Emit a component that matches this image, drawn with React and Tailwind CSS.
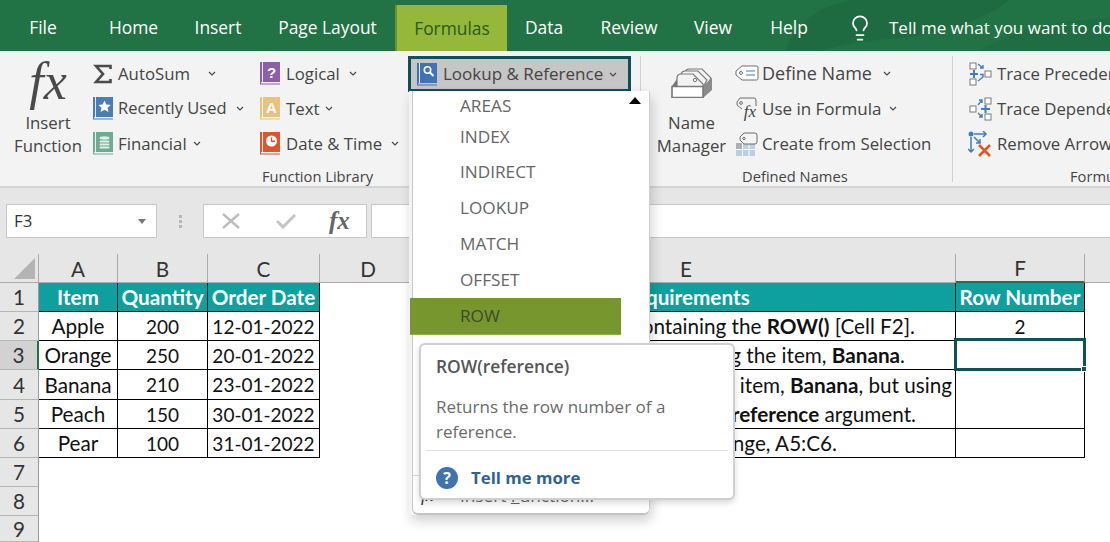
import React from 'react';
import { Lightbulb } from 'lucide-react';

const tabs = [
    { label: 'File', w: 'w-[86px]' },
    { label: 'Home', w: 'w-[95px]' },
    { label: 'Insert', w: 'w-[74px]' },
    { label: 'Page Layout', w: 'w-[140px] pl-[5px]' },
];
const tabsAfter = [
    { label: 'Data', w: 'w-[74px]' },
    { label: 'Review', w: 'w-[96px]' },
    { label: 'View', w: 'w-[72px]' },
    { label: 'Help', w: 'w-[80px]' },
];

const Chevron = ({ className = '' }) => (
    <svg width="8" height="5" viewBox="0 0 8 5" className={className}>
        <path d="M1 1l3 3 3-3" fill="none" stroke="#444" strokeWidth="1.1" />
    </svg>
);

// little coloured function book used all over the ribbon
const Book = ({ color, line, children }) => (
    <svg width="20" height="23" viewBox="0 0 20 23" className="shrink-0">
        <rect x="0" y="0" width="20" height="20" fill={color} />
        <rect x="2" y="0" width="1" height="20" fill="#fff" opacity="0.85" />
        <path d="M0.5 0v22H20" fill="none" stroke={line || color} strokeWidth="1.2" />
        {children}
    </svg>
);

const SigmaIcon = () => (
    <svg width="19" height="20" viewBox="0 0 19 20" className="shrink-0">
        <path d="M17.5 5V2H3l7 8-7 8h14.5v-3" fill="none" stroke="#4a4a4a" strokeWidth="2.6" />
    </svg>
);

const StarBook = () => (
    <Book color="#4a7db5">
        <path d="M11.5 3.5l1.9 4 4.3.4-3.2 2.9 1 4.3-4-2.3-4 2.3 1-4.3-3.2-2.9 4.3-.4z" fill="#fff" />
    </Book>
);
const StackBook = () => (
    <Book color="#6dab93">
        <ellipse cx="11.5" cy="6" rx="5" ry="1.7" fill="#dfeee8" />
        <rect x="6.5" y="8.4" width="10" height="2.2" rx="1" fill="#dfeee8" />
        <rect x="6.5" y="11.4" width="10" height="2.2" rx="1" fill="#dfeee8" />
        <rect x="6.5" y="14.4" width="10" height="2.2" rx="1" fill="#dfeee8" />
    </Book>
);
const LetterBook = ({ color, letter }) => (
    <Book color={color}>
        <text x="11.5" y="15.5" textAnchor="middle" fontSize="15" fontWeight="700" fill="#fff" fontFamily="'Liberation Sans', sans-serif">{letter}</text>
    </Book>
);
const ClockBook = () => (
    <Book color="#d9572f">
        <circle cx="11.5" cy="9" r="5.5" fill="#fff" />
        <path d="M11.5 5.5V9.3H15" fill="none" stroke="#d9572f" strokeWidth="1.4" />
    </Book>
);
const LookupBook = () => (
    <Book color="#3f73b5">
        <circle cx="10.5" cy="7" r="3.2" fill="none" stroke="#fff" strokeWidth="1.6" />
        <path d="M13 9.5l3.5 3.5" stroke="#fff" strokeWidth="2" />
    </Book>
);

const TagIcon = () => (
    <svg width="24" height="17" viewBox="0 0 24 17" className="shrink-0">
        <path d="M7 1h14.5a1.5 1.5 0 011.5 1.5v11a1.5 1.5 0 01-1.5 1.5H7l-6-5V6z" fill="#fff" stroke="#6d6d6d" />
        <circle cx="6" cy="8" r="1.5" fill="none" stroke="#6d6d6d" />
        <path d="M11 6h9M11 10h9" stroke="#3f7fc0" strokeWidth="1.2" />
    </svg>
);
const FormulaTagIcon = () => (
    <svg width="22" height="24" viewBox="0 0 22 24" className="shrink-0">
        <path d="M4 1h14a2 2 0 012 2v6M1 5l3-4M1 5v3l5 4" fill="none" stroke="#6d6d6d" />
        <circle cx="5" cy="6" r="1.4" fill="none" stroke="#6d6d6d" />
        <text x="14" y="20" textAnchor="middle" fontSize="17" fontStyle="italic" fill="#444" fontFamily="'Liberation Serif', serif">fx</text>
    </svg>
);
const SelectionIcon = () => (
    <svg width="22" height="24" viewBox="0 0 22 24" className="shrink-0">
        <rect x="0" y="11" width="19" height="13" fill="#b9cfe4" />
        <rect x="0" y="11" width="6.5" height="6.5" fill="#8f8f8f" opacity="0.45" />
        <path d="M0 17.5h19M6.5 11v13M13 11v13" stroke="#fff" strokeWidth="1" />
        <path d="M8 1h11a2 2 0 012 2v7a2 2 0 01-2 2H8l-4-4V5z" fill="#f3f3f3" stroke="#6d6d6d" />
        <circle cx="8" cy="6.5" r="1.2" fill="none" stroke="#6d6d6d" />
    </svg>
);
const NameManagerIcon = () => (
    <svg width="42" height="31" viewBox="0 0 42 31" className="shrink-0">
        <path d="M14 5q1-3 4-3h13l9 9-5 9H12z" fill="#f3f3f3" stroke="#7a7a7a" strokeWidth="1.2" />
        <path d="M10 7q1-3 4-3h13l9 9-5 9H8z" fill="#f3f3f3" stroke="#7a7a7a" strokeWidth="1.2" />
        <path d="M6 11q0-4 4-4h12l10 10v4H6z" fill="#f3f3f3" stroke="#7a7a7a" strokeWidth="1.2" />
        <circle cx="24" cy="13" r="1.7" fill="none" stroke="#7a7a7a" />
        <path d="M32 19l9-8v12l-9 8z" fill="#8a8a8a" />
        <path d="M1 19.5h31v11H1z" fill="#fff" stroke="#7a7a7a" strokeWidth="1.6" />
        <path d="M1 19l5-7v7z" fill="#777" />
    </svg>
);

const Box = ({ x, y }) => <rect x={x} y={y} width="6" height="6" fill="#fff" stroke="#7a7a7a" />;
const TracePrecedentsIcon = () => (
    <svg width="23" height="24" viewBox="0 0 23 24" className="shrink-0">
        <Box x={1} y={1} /><Box x={1} y={17} /><Box x={16} y={9} />
        <path d="M1 12h8M5 8v8" stroke="#3f7fc0" strokeWidth="2" />
        <path d="M9 2l5 4M14 3v3h-3M9 19l5-4M11 12.5h3v3" fill="none" stroke="#3f7fc0" strokeWidth="1.4" />
    </svg>
);
const TraceDependentsIcon = () => (
    <svg width="23" height="24" viewBox="0 0 23 24" className="shrink-0">
        <Box x={1} y={9} /><Box x={16} y={1} /><Box x={16} y={17} />
        <path d="M12 12h9M16.5 8v8" stroke="#3f7fc0" strokeWidth="2" />
        <path d="M9 8l4-5M10 3h3v3M9 16l4 4M13 17v3h-3" fill="none" stroke="#3f7fc0" strokeWidth="1.4" />
    </svg>
);
const RemoveArrowsIcon = () => (
    <svg width="24" height="26" viewBox="0 0 24 26" className="shrink-0">
        <circle cx="3" cy="3" r="2.5" fill="#3f7fc0" />
        <path d="M6 3h12M15 0l3 3-3 3M3 6v15M0 18l3 3 3-3M6 6l6 6M12 8v4H8" fill="none" stroke="#3f7fc0" strokeWidth="1.5" />
        <path d="M11 14l11 11M22 14L11 25" stroke="#e2572b" strokeWidth="2.6" />
    </svg>
);

const RibbonItem = ({ icon, label, chevron, gap = 'ml-[6px]', chevronGap = 'ml-[9px]', iconBox = 'w-[19px]', textSize = '' }) => (
    <div className="flex items-center h-[35px]">
        <div className={`${iconBox} flex items-center justify-center shrink-0`}>{icon}</div>
        <span className={`${gap} ${textSize} whitespace-nowrap`}>{label}</span>
        {chevron && <Chevron className={chevronGap} />}
    </div>
);

const GroupLabel = ({ children, className = '' }) => (
    <div className={`h-[22px] leading-[22px] text-[14.7px] text-[#444] whitespace-nowrap ${className}`}>{children}</div>
);

const Cell = ({ children, className = '' }) => (
    <div className={`flex items-center justify-center pt-[2px] border-r border-b border-black whitespace-nowrap overflow-hidden ${className}`}>{children}</div>
);
const Head = ({ children, className = '' }) => (
    <div className={`flex items-center justify-center pt-[3px] bg-[#e6e6e6] border-r border-[#ababab] text-[#333] ${className}`}>{children}</div>
);
const RowHead = ({ children, active }) => (
    <div className={`flex items-center justify-center pt-[2px] border-b border-[#b5b5b5] text-[#333] ${active ? 'bg-[#d2d2d2] text-[#1f6b43] border-r-2 border-r-[#217346]' : 'bg-[#e6e6e6] border-r border-r-[#9a9a9a]'}`}>{children}</div>
);
const Req = ({ children, pr }) => (
    <div className={`flex items-center justify-end pt-[2px] border-r border-b border-black whitespace-nowrap overflow-hidden ${pr}`}><span>{children}</span></div>
);

const rows = [
    ['Apple', '200', '12-01-2022'],
    ['Orange', '250', '20-01-2022'],
    ['Banana', '210', '23-01-2022'],
    ['Peach', '150', '30-01-2022'],
    ['Pear', '100', '31-01-2022'],
];

const DataCells = ({ row }) => (
    <>
        <Cell>{row[0]}</Cell>
        <Cell className="text-[19px]">{row[1]}</Cell>
        <Cell className="text-[19px]">{row[2]}</Cell>
    </>
);

const Sheet = () => (
    <div className="grid grid-cols-[39px_79px_90px_112px_97px_539px_129px_1fr] grid-rows-[29px_29px_29px_29px_30px_29px_29px_29px_29px_26px] text-[20.7px] font-['Lato','Open_Sans',sans-serif] text-[#111] bg-white">
        {/* column letters */}
        <div className="bg-[#e6e6e6] border-r border-b border-[#ababab] flex items-end justify-end pr-[3px] pb-[3px]">
            <svg width="21" height="21" viewBox="0 0 21 21"><path d="M21 0v21H0z" fill="#b4b4b4" /></svg>
        </div>
        {['A', 'B', 'C', 'D', 'E'].map(c => <Head key={c} className="border-b border-b-[#ababab]">{c}</Head>)}
        <Head className="bg-[#d2d2d2] text-[#1f6b43] border-b-2 border-b-[#217346]">F</Head>
        <div className="bg-[#e6e6e6] border-b border-[#ababab]" />

        {/* row 1 */}
        <RowHead>1</RowHead>
        {['Item', 'Quantity', 'Order Date'].map(t => (
            <Cell key={t} className="bg-[#0da09f] text-white font-bold">{t}</Cell>
        ))}
        <div />
        <Cell className="bg-[#0da09f] text-white font-bold">Requirements</Cell>
        <Cell className="bg-[#0da09f] text-white font-bold">Row Number</Cell>
        <div />

        {/* row 2 */}
        <RowHead>2</RowHead>
        <DataCells row={rows[0]} />
        <div />
        <Req pr="pr-[40px]">Find the row number of the cell containing the <b>ROW()</b> [Cell F2].</Req>
        <Cell className="text-[19px]">2</Cell>
        <div />

        {/* row 3 */}
        <RowHead active>3</RowHead>
        <DataCells row={rows[1]} />
        <div />
        <Req pr="pr-[50px]">Find the row number using the item, <b>Banana</b>.</Req>
        <div className="relative border-r border-b border-black">
            <div className="absolute -left-[2px] -top-[3px] -right-[2px] -bottom-[2px] border-[3px] border-[#0f5257]" />
            <div className="absolute -right-[3px] -bottom-[3px] w-[6px] h-[6px] bg-[#0f5257] border border-white" />
        </div>
        <div />

        {/* row 4 and 5, E and F are merged */}
        <RowHead>4</RowHead>
        <DataCells row={rows[2]} />
        <div />
        <div className="row-span-2 flex flex-col items-end justify-center pt-[2px] border-r border-b border-black whitespace-nowrap leading-[29px]">
            <span className="pr-[3px]">Find the row number of the item, <b>Banana</b>, but using</span>
            <span className="pr-[39px]">the <b>reference</b> argument.</span>
        </div>
        <div className="row-span-2 border-r border-b border-black" />
        <div className="row-span-2" />
        <RowHead>5</RowHead>
        <DataCells row={rows[3]} />
        <div />

        {/* row 6 */}
        <RowHead>6</RowHead>
        <DataCells row={rows[4]} />
        <div />
        <Req pr="pr-[118px]">Find the row number of the range, A5:C6.</Req>
        <div className="border-r border-b border-black" />
        <div />

        {['7', '8', '9'].map(n => (
            <React.Fragment key={n}>
                <RowHead>{n}</RowHead>
                <div className="col-span-7" />
            </React.Fragment>
        ))}
    </div>
);

const menuItems = [
    { label: 'AREAS', h: 'h-[30px]' },
    { label: 'INDEX', h: 'h-[33px] pb-[2px]' },
    { label: 'INDIRECT', h: 'h-[36px]' },
    { label: 'LOOKUP', h: 'h-[36px]' },
    { label: 'MATCH', h: 'h-[36px]' },
    { label: 'OFFSET', h: 'h-[36px]' },
];

const App = () => {
    return (
        <div className="relative w-[1110px] h-[542px] overflow-hidden bg-white font-['Open_Sans',sans-serif] text-[16.8px] text-[#444]">
            {/* tab bar */}
            <div className="relative h-[51px] bg-[#217346] text-white text-[17.4px] flex items-center overflow-hidden pt-[4px]">
                <svg className="absolute left-[780px] top-0" width="330" height="51" viewBox="0 0 330 51">
                    <path d="M5 51Q20 10 70 0H230Q190 30 120 38 70 42 40 51z" fill="#1f6b41" />
                    <path d="M200 51Q250 20 330 18V51z" fill="#1f6e43" />
                </svg>
                {tabs.map(t => (
                    <div key={t.label} className={`${t.w} relative shrink-0 text-center whitespace-nowrap`}>{t.label}</div>
                ))}
                <div className="relative w-[112px] h-[46px] mt-[1px] shrink-0 bg-[#95b83a] border-l-2 border-[#6f932a] text-[#2a5a1c] flex items-center justify-center">Formulas</div>
                {tabsAfter.map(t => (
                    <div key={t.label} className={`${t.w} relative shrink-0 text-center whitespace-nowrap`}>{t.label}</div>
                ))}
                <Lightbulb size={28} strokeWidth={1.5} className="relative ml-[17px] shrink-0" />
                <span className="relative ml-[15px] text-[17px] whitespace-nowrap">Tell me what you want to do</span>
            </div>

            {/* ribbon */}
            <div className="h-[137px] bg-[#f3f3f3] border-b-2 border-[#d4d4d4] flex">
                <div className="w-[640px] shrink-0 flex flex-col">
                    <div className="flex h-[110px] pt-[5px]">
                        <div className="w-[93px] shrink-0 flex flex-col items-center pl-[4px] pr-[1px] leading-[23px]">
                            <span className="h-[50px] text-[52px] leading-[52px] italic text-[#4a4a4a] font-['Liberation_Serif',serif]">fx</span>
                            <span className="mt-[5px]">Insert</span>
                            <span>Function</span>
                        </div>
                        <div className="w-[167px] shrink-0 flex flex-col">
                            <RibbonItem icon={<SigmaIcon />} label="AutoSum" chevronGap="ml-[18px]" chevron />
                            <RibbonItem icon={<StarBook />} label="Recently Used" textSize="text-[16.5px]" chevron />
                            <RibbonItem icon={<StackBook />} label="Financial" chevronGap="ml-[6px]" chevron />
                        </div>
                        <div className="w-[148px] shrink-0 flex flex-col">
                            <RibbonItem icon={<LetterBook color="#8c5fad" letter="?" />} label="Logical" gap="ml-[7px]" chevron />
                            <RibbonItem icon={<LetterBook color="#eac27e" letter="A" />} label="Text" gap="ml-[7px]" chevronGap="ml-[6px]" chevron />
                            <RibbonItem icon={<ClockBook />} label="Date & Time" gap="ml-[7px]" chevron />
                        </div>
                        <div className="w-[223px] h-[36px] shrink-0 border-[3px] border-[#0f4f57] bg-[#c6c6c6] flex items-center pl-[6px]">
                            <LookupBook />
                            <span className="ml-[6px] text-[17px] whitespace-nowrap">Lookup &amp; Reference</span>
                            <Chevron className="ml-[6px]" />
                        </div>
                    </div>
                    <GroupLabel className="pl-[262px] mt-[4px]">Function Library</GroupLabel>
                </div>
                <div className="w-px h-[126px] mt-[5px] bg-[#d0d0d0] shrink-0" />
                <div className="w-[311px] shrink-0 flex flex-col">
                    <div className="flex h-[110px] pt-[5px]">
                        <div className="w-[94px] shrink-0 flex flex-col items-center pl-[7px] leading-[23px]">
                            <div className="h-[50px] pt-[11px]"><NameManagerIcon /></div>
                            <span className="mt-[5px]">Name</span>
                            <span>Manager</span>
                        </div>
                        <div className="flex flex-col">
                            <RibbonItem icon={<TagIcon />} label="Define Name" iconBox="w-[24px]" gap="ml-[3px]" textSize="text-[18px]" chevronGap="ml-[11px]" chevron />
                            <RibbonItem icon={<FormulaTagIcon />} label="Use in Formula" iconBox="w-[24px]" gap="ml-[3px]" textSize="text-[17px]" chevronGap="ml-[8px]" chevron />
                            <RibbonItem icon={<SelectionIcon />} label="Create from Selection" iconBox="w-[24px]" gap="ml-[3px]" />
                        </div>
                    </div>
                    <GroupLabel className="pl-[101px] mt-[4px]">Defined Names</GroupLabel>
                </div>
                <div className="w-px h-[126px] mt-[5px] bg-[#d0d0d0] shrink-0" />
                <div className="flex-1 min-w-0 flex flex-col overflow-hidden pl-[15px]">
                    <div className="flex flex-col h-[110px] pt-[5px]">
                        <RibbonItem icon={<TracePrecedentsIcon />} label="Trace Precedents" iconBox="w-[24px]" gap="ml-[5px]" />
                        <RibbonItem icon={<TraceDependentsIcon />} label="Trace Dependents" iconBox="w-[24px]" gap="ml-[5px]" />
                        <RibbonItem icon={<RemoveArrowsIcon />} label="Remove Arrows" iconBox="w-[24px]" gap="ml-[5px]" />
                    </div>
                    <GroupLabel className="pl-[102px] mt-[4px]">Formula Auditing</GroupLabel>
                </div>
            </div>

            {/* formula bar */}
            <div className="h-[66px] bg-[#e6e6e6] flex items-start pt-[16px] pl-[6px]">
                <div className="w-[151px] h-[34px] bg-white border border-[#c8c8c8] flex items-center justify-between pl-[7px] pr-[10px] text-[#333]">
                    F3
                    <svg width="8" height="5" viewBox="0 0 8 5"><path d="M0 0h8L4 5z" fill="#777" /></svg>
                </div>
                <div className="w-[46px] h-[34px] flex flex-col items-center justify-center gap-[2px]">
                    <span className="w-[3px] h-[3px] bg-[#b5b5b5]" />
                    <span className="w-[3px] h-[3px] bg-[#b5b5b5]" />
                    <span className="w-[3px] h-[3px] bg-[#b5b5b5]" />
                </div>
                <div className="w-[164px] h-[34px] bg-white border border-[#c8c8c8] flex items-center pl-[18px]">
                    <svg width="18" height="16" viewBox="0 0 18 16"><path d="M1 1l16 14M17 1L1 15" stroke="#bdbdbd" strokeWidth="2.4" /></svg>
                    <svg className="ml-[36px]" width="20" height="16" viewBox="0 0 20 16"><path d="M1 8l6 6L19 2" fill="none" stroke="#c4c4c4" strokeWidth="3" /></svg>
                    <span className="ml-[33px] text-[25px] font-bold italic text-[#666] font-['Liberation_Serif',serif]">fx</span>
                </div>
                <div className="flex-1 ml-[4px] h-[34px] bg-white border border-[#c8c8c8] border-r-0" />
            </div>

            <Sheet />

            {/* Lookup & Reference dropdown */}
            <div className="absolute left-[409px] top-[91px] w-[241px] h-[424px] bg-white border-l-[3px] border-[#f3f3f3] shadow-[2px_6px_12px_rgba(0,0,0,0.18)] rounded-br-md text-[#666] text-[17.2px]">
                <div className="border-l border-[#c8c8c8] h-full rounded-bl-md border-b-2 border-b-[#c4c4c4] border-r border-r-[#d0d0d0] rounded-br-md flex flex-col">
                    {menuItems.map(m => (
                        <div key={m.label} className={`${m.h} flex items-center pl-[47px]`}>{m.label}</div>
                    ))}
                    <div className="h-[37px] w-[211px] -ml-[3px] bg-[#77962d] border-b border-[#8fb33a] flex items-center pl-[50px] text-[#3f4a2a]">ROW</div>
                    <div className="flex-1" />
                    <div className="h-[38px] border-t border-[#d8d8d8] flex items-start pt-[9px] pl-[8px] leading-[22px]">
                        <span className="w-[39px] italic text-[#333] font-['Liberation_Serif',serif]">fx</span>
                        <span>Insert <u>F</u>unction...</span>
                    </div>
                </div>
                <div className="absolute right-[9px] top-[6px] w-0 h-0 border-l-[6px] border-r-[6px] border-b-[7px] border-l-transparent border-r-transparent border-b-black" />
            </div>

            {/* ROW tooltip */}
            <div className="absolute left-[419px] top-[343px] w-[316px] h-[157px] bg-white border-2 border-[#cfcfcf] rounded-md shadow-[0_3px_6px_rgba(0,0,0,0.15)] px-[5px] text-[17px] text-[#6a6a6a]">
                <div className="px-[10px] pt-[9px] font-semibold text-[17.4px] text-[#555] leading-[24px]">ROW(reference)</div>
                <div className="px-[10px] mt-[16px] leading-[25px] pb-[6px]">Returns the row number of a<br />reference.</div>
                <div className="h-px bg-[#e2e2e2]" />
                <div className="flex items-center px-[10px] mt-[14px]">
                    <span className="w-[22px] h-[22px] rounded-full bg-[#3f73ad] text-white font-bold flex items-center justify-center text-[16px]">?</span>
                    <span className="ml-[13px] font-bold text-[#2e6296] text-[16.8px]">Tell me more</span>
                </div>
            </div>
        </div>
    );
};

export default App;
